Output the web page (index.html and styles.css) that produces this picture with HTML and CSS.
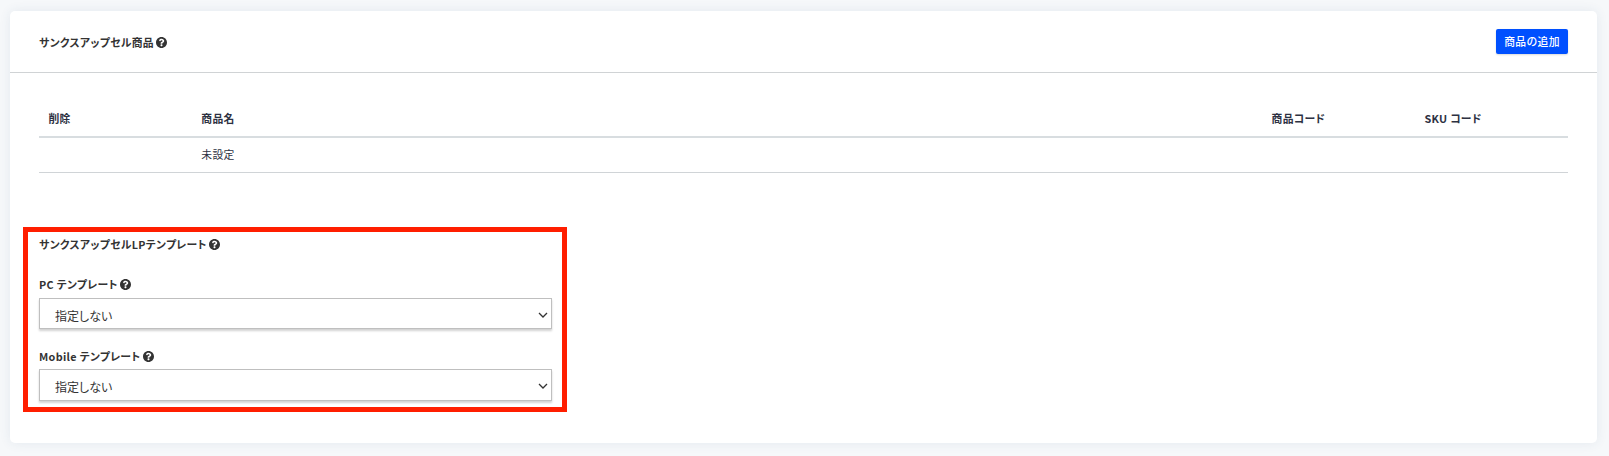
FILE: index.html
```
<!DOCTYPE html>
<html lang="ja">
<head>
<meta charset="utf-8">
<title>サンクスアップセル商品</title>
<link rel="stylesheet" href="styles.css">
</head>
<body>
<svg width="0" height="0" class="sprite">
  <symbol id="help" viewBox="8 8 496 496"><path fill="currentColor" d="M504 256c0 136.997-111.043 248-248 248S8 392.997 8 256C8 119.083 119.043 8 256 8s248 111.083 248 248zM262.655 90c-54.497 0-89.255 22.957-116.549 63.758-3.536 5.286-2.353 12.415 2.715 16.258l34.699 26.31c5.205 3.947 12.621 3.008 16.665-2.122 17.864-22.658 30.113-35.797 57.303-35.797 20.429 0 45.698 13.148 45.698 32.958 0 14.976-12.363 22.667-32.534 33.976C247.128 238.528 216 254.941 216 296v4c0 6.627 5.373 12 12 12h56c6.627 0 12-5.373 12-12v-1.333c0-28.462 83.186-29.647 83.186-106.667 0-58.002-60.165-102-116.531-102zM256 338c-25.365 0-46 20.635-46 46 0 25.364 20.635 46 46 46s46-20.636 46-46c0-25.365-20.635-46-46-46z"/></symbol>
</svg>
<main class="card">
  <header class="card-header">
    <h2 class="title"><span>サンクスアップセル商品</span><svg class="help"><use href="#help"/></svg></h2>
    <button class="add">商品の追加</button>
  </header>
  <table class="products">
    <thead><tr><th class="narrow">削除</th><th>商品名</th><th class="narrow">商品コード</th><th class="narrow">SKU コード</th></tr></thead>
    <tbody><tr><td></td><td>未設定</td><td></td><td></td></tr></tbody>
  </table>
  <section class="templates">
    <h3 class="title section-title"><span>サンクスアップセルLPテンプレート</span><svg class="help"><use href="#help"/></svg></h3>
    <div class="title label"><span>PC テンプレート</span><svg class="help"><use href="#help"/></svg></div>
    <div class="select"><span>指定しない</span><svg class="chevron" viewBox="0 0 10 6"><path d="M1 1l4 4 4-4"/></svg></div>
    <div class="title label second"><span>Mobile テンプレート</span><svg class="help"><use href="#help"/></svg></div>
    <div class="select tall"><span>指定しない</span><svg class="chevron" viewBox="0 0 10 6"><path d="M1 1l4 4 4-4"/></svg></div>
  </section>
</main>
</body>
</html>
```
FILE: styles.css
```
* { box-sizing: border-box; }
body {
  margin: 0;
  height: 456px;
  padding: 11px 12px 0 10px;
  overflow: hidden;
  background: #f6f8fa;
  color: #333;
  font-family: "Noto Sans CJK JP", sans-serif;
  font-size: 10.8px;
  letter-spacing: .3px;
  font-feature-settings: "palt";
}
.sprite { display: none; }
.card {
  height: 432px;
  background: #fff;
  border-radius: 5px;
  box-shadow: 0 0 12px rgba(40, 80, 120, .09);
}
.card-header {
  height: 62px;
  padding: 18px 29px 0;
  border-bottom: 1px solid #d0d3d5;
  display: flex;
  justify-content: space-between;
  align-items: flex-start;
}
.title {
  margin: 0;
  display: flex;
  align-items: center;
  height: 16px;
  gap: 2.5px;
  font-size: 10.8px;
  font-weight: 700;
  letter-spacing: .33px;
  white-space: nowrap;
}
.card-header .title { margin-top: 5px; }
.help { width: 11px; height: 11px; }
.add {
  width: 72px;
  height: 25px;
  padding: 0;
  border: 0;
  border-radius: 2px;
  background: #0050ff;
  color: #fff;
  font: 500 10.8px/25px "Noto Sans CJK JP", sans-serif;
  letter-spacing: .3px;
  box-shadow: 0 1px 2px rgba(0, 0, 0, .15);
}
.products {
  width: 1529px;
  margin: 28px 0 0 29px;
  table-layout: fixed;
  border-collapse: separate;
  border-spacing: 0;
  color: #2d3142;
  text-align: left;
}
.products th, .products td { padding: 0 9.4px; }
.products th { height: 37px; padding-bottom: 1px; font-weight: 700; border-bottom: 2px solid #d8dde0; }
.products td { height: 35px; padding-bottom: 2px; border-bottom: 1px solid #d0d4d7; }
.narrow { width: 10%; }
.templates {
  width: 544px;
  height: 185px;
  margin: 54px 0 0 13px;
  border: 5px solid #ff1e00;
  padding: 4px 10px 0 11px;
}
.label { margin-top: 24px; }
.label.second { margin-top: 19px; }
.select {
  display: flex;
  align-items: center;
  justify-content: space-between;
  height: 31px;
  margin-top: 6px;
  padding: 3px 3px 0 15px;
  border: 1px solid #bfbfbf;
  box-shadow: 0 2px 2px rgba(0, 0, 0, .18);
  font-size: 12px;
  letter-spacing: 0;
}
.select.tall { height: 32px; margin-top: 5px; }
.chevron {
  width: 10px;
  height: 6px;
  margin-bottom: 1px;
  fill: none;
  stroke: #333;
  stroke-width: 1.3;
}
```
